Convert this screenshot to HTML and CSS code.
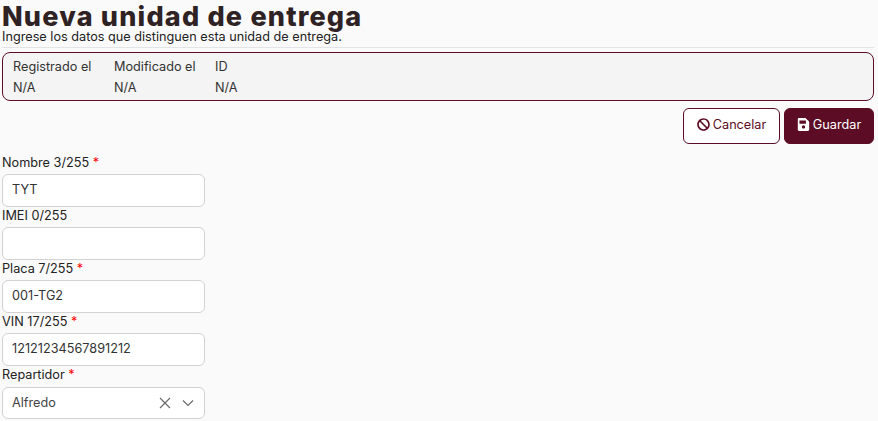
FILE: index.html
```html
<!DOCTYPE html>
<html lang="es">
<head>
    <meta charset="UTF-8">
    <title>Nueva unidad de entrega</title>
    <link rel="stylesheet" href="styles.css">
</head>
<body>

<div class="page">
    <!-- Header -->
    <h1 class="page-title">Nueva unidad de entrega</h1>
    <p class="page-subtitle">Ingrese los datos que distinguen esta unidad de entrega.</p>
    <hr class="divider">

    <!-- Record info -->
    <div class="record-info">
        <div class="record-col">
            <span>Registrado el</span>
            <span>N/A</span>
        </div>
        <div class="record-col">
            <span>Modificado el</span>
            <span>N/A</span>
        </div>
        <div class="record-col">
            <span>ID</span>
            <span>N/A</span>
        </div>
    </div>

    <!-- Actions -->
    <div class="actions">
        <button class="btn btn-outline" type="button">
            <svg class="btn-icon" viewBox="0 0 512 512"><path fill="currentColor" d="M256 8C119 8 8 119 8 256s111 248 248 248 248-111 248-248S393 8 256 8zm130 116c65 65 70 165 20 236L152 106c71-50 171-45 234 18zM126 388c-65-65-70-165-20-236l254 254c-71 50-171 45-234-18z"/></svg>
            Cancelar
        </button>
        <button class="btn btn-primary" type="button">
            <svg class="btn-icon" viewBox="0 0 448 512"><path fill="currentColor" fill-rule="evenodd" d="M433 129L319 15c-9-9-21-15-34-15H48C21 0 0 21 0 48v416c0 27 21 48 48 48h352c27 0 48-21 48-48V163c0-13-5-25-15-34zM224 416c-35 0-64-29-64-64s29-64 64-64 64 29 64 64-29 64-64 64zm96-304v100c0 7-5 12-12 12H76c-7 0-12-5-12-12V108c0-7 5-12 12-12h228c3 0 6 1 8 4l4 4c3 2 4 5 4 8z"/></svg>
            Guardar
        </button>
    </div>

    <!-- Form -->
    <form class="form">
        <label class="field-label">Nombre 3/255 <span class="required">*</span></label>
        <input class="field-input" type="text" value="TYT">

        <label class="field-label">IMEI 0/255</label>
        <input class="field-input" type="text">

        <label class="field-label">Placa 7/255 <span class="required">*</span></label>
        <input class="field-input" type="text" value="001-TG2">

        <label class="field-label">VIN 17/255 <span class="required">*</span></label>
        <input class="field-input" type="text" value="12121234567891212">

        <label class="field-label">Repartidor <span class="required">*</span></label>
        <div class="select-box">
            <span class="select-value">Alfredo</span>
            <svg class="select-clear" viewBox="0 0 12 12"><path d="M1 1l10 10M11 1L1 11"/></svg>
            <svg class="select-arrow" viewBox="0 0 12 8"><path d="M1 1.5l5 5 5-5"/></svg>
        </div>
    </form>
</div>

</body>
</html>
```

FILE: styles.css
```css
* {
    box-sizing: border-box;
}

body {
    margin: 0;
    font-family: "Inter", "Noto Sans", sans-serif;
    font-size: 12.7px;
    color: #2f2224;
    background-color: #fafafa;
    overflow: hidden;
}

.page {
    padding: 0 4px 0 2px;
}

/* Header */
.page-title {
    margin: 0;
    font-size: 27px;
    line-height: 33px;
    letter-spacing: 1.2px;
    font-weight: 800;
    color: #2f2224;
}

.page-subtitle {
    margin: -3px 0 0;
    font-size: 12.7px;
    line-height: 13px;
    color: #222;
}

.divider {
    border: none;
    border-top: 1px solid #e2e4e8;
    margin: 4px 0 4px;
}

/* Record info */
.record-info {
    display: flex;
    height: 49px;
    padding: 5px 10px 3px;
    background-color: #f4f4f4;
    border: 1px solid #5c0c24;
    border-radius: 8px;
}

.record-col {
    display: flex;
    flex-direction: column;
    justify-content: space-between;
    width: 101px;
    line-height: 18px;
    color: #333;
}

/* Buttons */
.actions {
    display: flex;
    justify-content: flex-end;
    gap: 4px;
    margin-top: 7px;
}

.btn {
    display: flex;
    align-items: center;
    justify-content: center;
    gap: 3px;
    height: 36px;
    padding: 0 0 3px 0;
    border-radius: 6px;
    font-family: inherit;
    font-size: 12.7px;
    cursor: pointer;
}

.btn-icon {
    width: 13px;
    height: 13px;
}

.btn-outline {
    width: 97px;
    color: #5c0c24;
    background-color: #fff;
    border: 1px solid #5c0c24;
}

.btn-primary {
    width: 90px;
    color: #fff;
    background-color: #5c0c24;
    border: 1px solid #5c0c24;
}

/* Form */
.form {
    display: flex;
    flex-direction: column;
    width: 203px;
    margin-top: 10px;
}

.field-label {
    height: 20px;
    line-height: 18px;
    color: #222;
}

.required {
    color: #f00;
}

.field-input {
    height: 33px;
    padding: 0 9px 2px;
    font-family: inherit;
    font-size: 12.7px;
    color: #333;
    background-color: #fff;
    border: 1px solid #d2d2d2;
    border-radius: 6px;
}

.select-box {
    display: flex;
    align-items: center;
    height: 32px;
    margin-top: 1px;
    padding: 0 10px 1px 9px;
    color: #444;
    background-color: #fff;
    border: 1px solid #d2d2d2;
    border-radius: 6px;
}

.select-value {
    flex: 1;
}

.select-clear {
    width: 12px;
    height: 12px;
    margin-right: 11px;
    fill: none;
    stroke: #666;
    stroke-width: 1.1;
}

.select-arrow {
    width: 12px;
    height: 8px;
    fill: none;
    stroke: #666;
    stroke-width: 1.1;
}
```
